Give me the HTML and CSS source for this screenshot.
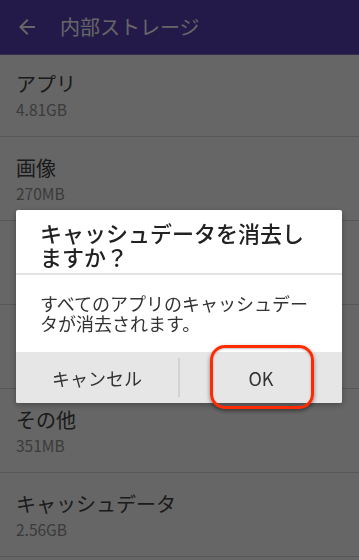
FILE: index.html
```html
<!DOCTYPE html>
<html lang="ja">
<head>
<meta charset="utf-8">
<link rel="stylesheet" href="styles.css">
</head>
<body>
<div class="screen">
  <header class="appbar">
    <svg class="back" viewBox="0 0 24 24" width="24" height="24"><path d="M20 11H7.83l5.59-5.59L12 4l-8 8 8 8 1.41-1.41L7.83 13H20v-2z"/></svg>
    <span class="appbar-title">内部ストレージ</span>
  </header>
  <ul class="list">
    <li class="row first"><div class="row-title">アプリ</div><div class="row-sub">4.81GB</div></li>
    <li class="row"><div class="row-title">画像</div><div class="row-sub">270MB</div></li>
    <li class="row"><div class="row-title">動画</div><div class="row-sub">1.02GB</div></li>
    <li class="row"><div class="row-title">音声</div><div class="row-sub">35.2MB</div></li>
    <li class="row"><div class="row-title">その他</div><div class="row-sub">351MB</div></li>
    <li class="row"><div class="row-title">キャッシュデータ</div><div class="row-sub">2.56GB</div></li>
  </ul>
</div>
<div class="scrim"></div>
<div class="dialog">
  <div class="dialog-title">キャッシュデータを消去しますか？</div>
  <div class="dialog-body">すべてのアプリのキャッシュデータが消去されます。</div>
  <div class="dialog-buttons">
    <div class="btn">キャンセル</div>
    <div class="sep"></div>
    <div class="btn">OK</div>
  </div>
</div>
<div class="highlight"></div>
</body>
</html>
```

FILE: styles.css
```css
* { box-sizing: border-box; }
html, body {
  margin: 0;
  padding: 0;
  width: 359px;
  height: 560px;
  overflow: hidden;
  font-family: "Noto Sans CJK JP", "Noto Sans", sans-serif;
  background: #fff;
}
.screen { width: 359px; height: 560px; background: #fff; }
.appbar {
  height: 55px;
  background: #5741b9;
  border-bottom: 1px solid #8070c8;
  display: flex;
  align-items: center;
  padding-left: 15px;
}
.back { fill: #fff; flex: none; margin-top: -1px; }
.appbar-title {
  color: #fff;
  font-size: 20px;
  margin-left: 21px;
  line-height: 24px;
}
.list { list-style: none; margin: 0; padding: 0; }
.row {
  padding: 19px 16px 18px;
  border-bottom: 1px solid #d6d6d6;
}
.row.first { padding-top: 17px; }
.row-title {
  font-size: 20px;
  line-height: 24px;
  color: #444;
}
.row-sub {
  margin-top: 4px;
  font-size: 15.5px;
  line-height: 18px;
  color: #949494;
}
.scrim {
  position: fixed;
  left: 0; top: 0;
  width: 359px; height: 560px;
  background: rgba(0,0,0,0.6);
}
.dialog {
  position: fixed;
  left: 16px;
  top: 210px;
  width: 326px;
  background: #fff;
  border-radius: 2px;
  overflow: hidden;
  box-shadow: 0 2px 6px rgba(0,0,0,0.3);
}
.dialog-title {
  padding: 10px 24px 5px;
  font-size: 22px;
  font-weight: 500;
  line-height: 24px;
  color: #222;
  border-bottom: 2px solid #e4e4e4;
}
.dialog-body {
  padding: 18px 24px 19px;
  font-size: 18px;
  line-height: 20px;
  color: #333;
}
.dialog-buttons {
  height: 51px;
  background: #e6e6e6;
  display: flex;
  align-items: center;
}
.btn {
  flex: 1;
  text-align: center;
  font-size: 18px;
  line-height: 24px;
  color: #333;
}
.sep {
  width: 2px;
  height: 39px;
  background: #d2d2d2;
  flex: none;
}
.highlight {
  position: fixed;
  left: 210px;
  top: 345px;
  width: 104px;
  height: 64px;
  border: 3px solid #ff2a00;
  border-radius: 15px;
  box-shadow: 0 2px 4px rgba(0,0,0,0.45), inset 0 1px 2px rgba(0,0,0,0.25);
}
```
